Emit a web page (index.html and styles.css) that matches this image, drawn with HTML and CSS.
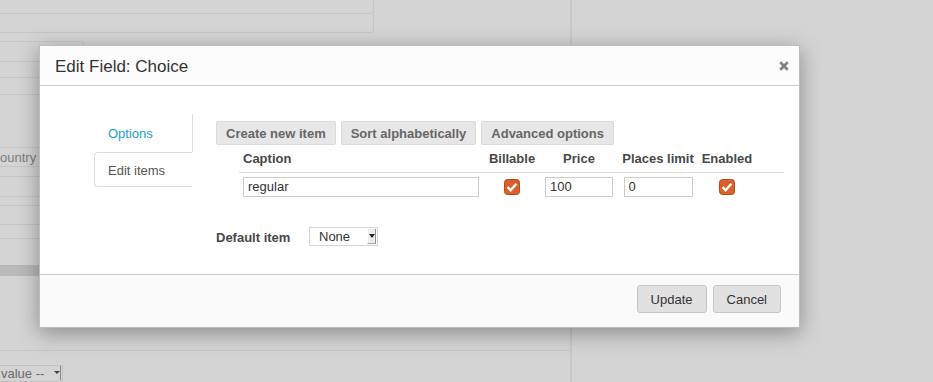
FILE: index.html
```html
<!DOCTYPE html>
<html>
<head>
<meta charset="utf-8">
<link rel="stylesheet" href="styles.css">
</head>
<body>
<div class="page">
  <div class="bg-left">
    <div class="bg-box1"></div>
    <div class="bg-box2"></div>
    <div class="bg-table">
      <div class="bg-tr r1"></div>
      <div class="bg-tr r2"></div>
      <div class="bg-tr r3"></div>
    </div>
    <div class="bg-field country"><span class="country-text">ountry</span></div>
    <div class="bg-field f2"></div>
    <div class="bg-field f3"></div>
    <div class="bg-line l1"></div>
    <div class="bg-bar"></div>
    <div class="bg-line l2"></div>
    <div class="bg-select"><span class="bg-select-text">value --</span><span class="bg-arrow"></span></div>
  </div>
</div>

<div class="modal">
  <div class="modal-header">
    <h4 class="modal-title">Edit Field: Choice</h4>
    <button class="close" type="button">
      <svg width="10" height="10" viewBox="0 0 10 10"><path d="M1.3 1.3 L8.7 8.7 M8.7 1.3 L1.3 8.7" stroke="#808080" stroke-width="2.7" fill="none"/></svg>
    </button>
  </div>
  <div class="modal-body">
    <ul class="tabs">
      <li class="tab"><a class="tab-link">Options</a></li>
      <li class="tab active"><a class="tab-link">Edit items</a></li>
    </ul>
    <div class="tab-content">
      <div class="toolbar">
        <button class="btn" type="button">Create new item</button>
        <button class="btn" type="button">Sort alphabetically</button>
        <button class="btn" type="button">Advanced options</button>
      </div>
      <table class="items">
        <colgroup>
          <col class="c-caption"><col class="c-bill"><col class="c-price"><col class="c-places"><col class="c-enabled"><col class="c-rest">
        </colgroup>
        <thead>
          <tr>
            <th class="left">Caption</th>
            <th>Billable</th>
            <th>Price</th>
            <th>Places limit</th>
            <th>Enabled</th>
            <th></th>
          </tr>
        </thead>
        <tbody>
          <tr>
            <td class="left"><input class="inp caption" type="text" value="regular"></td>
            <td><span class="check"><svg width="16" height="16" viewBox="0 0 16 16"><rect x="0.5" y="0.5" width="15" height="15" rx="3" fill="#d9602b" stroke="#b44b1c"/><path d="M3.6 8.2 L6.6 11.2 L12.4 4.8" stroke="#fff" stroke-width="2.4" fill="none"/></svg></span></td>
            <td><input class="inp price" type="text" value="100"></td>
            <td><input class="inp places" type="text" value="0"></td>
            <td><span class="check"><svg width="16" height="16" viewBox="0 0 16 16"><rect x="0.5" y="0.5" width="15" height="15" rx="3" fill="#d9602b" stroke="#b44b1c"/><path d="M3.6 8.2 L6.6 11.2 L12.4 4.8" stroke="#fff" stroke-width="2.4" fill="none"/></svg></span></td>
            <td></td>
          </tr>
        </tbody>
      </table>
      <div class="default-row">
        <label class="default-label">Default item</label>
        <div class="select"><span class="select-text">None</span><span class="select-arrow"></span></div>
      </div>
    </div>
  </div>
  <div class="modal-footer">
    <button class="fbtn" type="button">Update</button>
    <button class="fbtn" type="button">Cancel</button>
  </div>
</div>
</body>
</html>
```

FILE: styles.css
```css
* { box-sizing: border-box; }
html, body { margin: 0; padding: 0; }
body {
  width: 933px;
  height: 382px;
  overflow: hidden;
  background: #d4d4d4;
  font-family: "Liberation Sans", Arial, sans-serif;
  font-size: 13px;
  color: #333;
}

/* background page */
.page { display: flex; height: 382px; }
.bg-left {
  width: 572px;
  border-right: 2px solid #c9c9c9;
  display: flex;
  flex-direction: column;
  align-items: flex-start;
}
.bg-box1 {
  width: 374px; height: 14px;
  border-right: 1px solid #c6c6c6;
  border-bottom: 1px solid #c6c6c6;
  border-bottom-right-radius: 3px;
}
.bg-box2 {
  width: 374px; height: 20px;
  border: 1px solid #c6c6c6;
  border-top: none;
  border-left: none;
  border-radius: 0 0 3px 0;
}
.bg-table {
  margin-top: 8px;
  width: 84px;
  border-top: 1px solid #c6c6c6;
  border-right: 1px solid #c6c6c6;
  border-top-right-radius: 3px;
}
.bg-tr { border-bottom: 1px solid #c6c6c6; }
.r1 { height: 20px; }
.r2 { height: 16px; }
.r3 { height: 17px; }
.bg-field {
  width: 200px;
  height: 21px;
  border-top: 1px solid #c6c6c6;
  border-bottom: 1px solid #c6c6c6;
}
.country { margin-top: 52px; display: flex; align-items: center; }
.country-text { color: #7c7c7c; font-size: 13px; }
.f2 { margin-top: 9px; }
.f3 { margin-top: 8px; }
.bg-line { height: 1px; background: #c6c6c6; }
.l1 { width: 200px; margin-top: 13px; }
.bg-bar { width: 200px; height: 11px; margin-top: 26px; background: #b9b9b9; }
.l2 { width: 570px; margin-top: 74px; }
.bg-select {
  margin-top: 14px;
  margin-left: -2px;
  width: 65px; height: 18px;
  border: 1px solid #c2c2c2;
  display: flex; align-items: center;
  color: #6a6a6a;
}
.bg-select-text { padding-left: 2px; flex: 1; }
.bg-arrow {
  width: 8px; height: 14px; margin-right: 1px;
  border-right: 1px solid #8a8a8a;
  position: relative;
}
.bg-arrow::after {
  content: ""; position: absolute; left: 1px; top: 5px;
  border-left: 3px solid transparent; border-right: 3px solid transparent;
  border-top: 3px solid #444;
}

/* modal */
.modal {
  position: absolute;
  left: 39px; top: 45px;
  width: 761px;
  background: #fff;
  border: 1px solid #bdbdbd;
  box-shadow: 0 5px 20px rgba(0,0,0,.35);
}
.modal-header {
  height: 40px;
  padding: 0 10px 0 15px;
  background: #fcfcfc;
  border-bottom: 1px solid #cccccc;
  display: flex;
  align-items: center;
  justify-content: space-between;
}
.modal-title {
  margin: 0;
  font-size: 17px;
  font-weight: normal;
  line-height: 19px;
  color: #333;
  padding-top: 2px;
}
.close {
  background: none; border: 0; padding: 0;
  width: 10px; height: 10px;
  display: flex;
  margin-top: 1px;
}
.modal-body {
  height: 188px;
  padding: 28px 15px 0 54px;
  display: flex;
  align-items: flex-start;
}
.tabs {
  list-style: none;
  margin: 0; padding: 0;
  width: 100px;
  border-right: 1px solid #dddddd;
}
.tab { height: 38px; display: flex; align-items: center; }
.tab-link { padding-left: 14px; color: #1ba0d7; }
.tab.active {
  height: 35px;
  margin-right: -1px;
  background: #fff;
  border: 1px solid #dddddd;
  border-right-color: #fff;
  border-radius: 4px 0 0 4px;
  padding-top: 2px;
}
.tab.active .tab-link { padding-left: 13px; color: #555; }
.tab-content { margin-left: 23px; margin-top: 7px; }
.toolbar { display: flex; gap: 5px; }
.btn {
  height: 24px;
  padding: 0 9px;
  font: bold 13px "Liberation Sans", Arial, sans-serif;
  color: #666;
  background: #e7e7e7;
  border: 1px solid #dadada;
  border-radius: 2px;
}
.items {
  margin: 1px 0 0 23px;
  width: 545px;
  table-layout: fixed;
  border-collapse: collapse;
}
.c-caption { width: 245px; }
.c-bill { width: 56px; }
.c-price { width: 78px; }
.c-places { width: 80px; }
.c-enabled { width: 58px; }
.c-rest { width: 28px; }
.items thead tr { border-bottom: 1px solid #dddddd; }
.items th {
  height: 26px;
  padding: 0;
  font-weight: bold;
  color: #484848;
  text-align: center;
  white-space: nowrap;
}
.items th.left { text-align: left; padding-left: 4px; }
.items td { height: 28px; padding: 4px 0; text-align: center; vertical-align: middle; }
.items td.left { text-align: left; padding-left: 4px; }
.inp {
  height: 20px;
  border: 1px solid #cccccc;
  padding: 0 4px;
  font: 13px "Liberation Sans", Arial, sans-serif;
  color: #333;
  background: #fff;
  display: block;
  margin: 0 auto;
}
.caption { width: 236px; margin: 0; }
.price { width: 68px; }
.places { width: 69px; }
.check { display: inline-flex; vertical-align: middle; margin-top: 1px; }
.check svg { display: block; }
.default-row { display: flex; align-items: center; margin-top: 26px; }
.default-label { font-weight: bold; color: #484848; width: 93px; padding-top: 3px; }
.select {
  width: 69px; height: 19px;
  border: 1px solid #d6d6d6;
  display: flex; align-items: center;
  background: #fff;
}
.select-text { flex: 1; padding-left: 9px; color: #333; }
.select-arrow {
  width: 9px; height: 15px; margin-right: 1px;
  background: #ececec;
  border-left: 1px solid #fff;
  border-right: 1px solid #8f8f8f;
  border-bottom: 1px solid #a8a8a8;
  position: relative;
}
.select-arrow::after {
  content: ""; position: absolute; left: 1px; top: 5px;
  border-left: 3px solid transparent; border-right: 3px solid transparent;
  border-top: 4px solid #222;
}
.modal-footer {
  height: 53px;
  border-top: 1px solid #cccccc;
  background: #fafafa;
  padding: 10px 18px 0 0;
  display: flex;
  justify-content: flex-end;
  align-items: flex-start;
  gap: 6px;
}
.fbtn {
  height: 28px;
  padding: 0 13px;
  font: 13px "Liberation Sans", Arial, sans-serif;
  color: #333;
  background: #e1e1e1;
  border: 1px solid #c6c6c6;
  border-radius: 3px;
}
```
